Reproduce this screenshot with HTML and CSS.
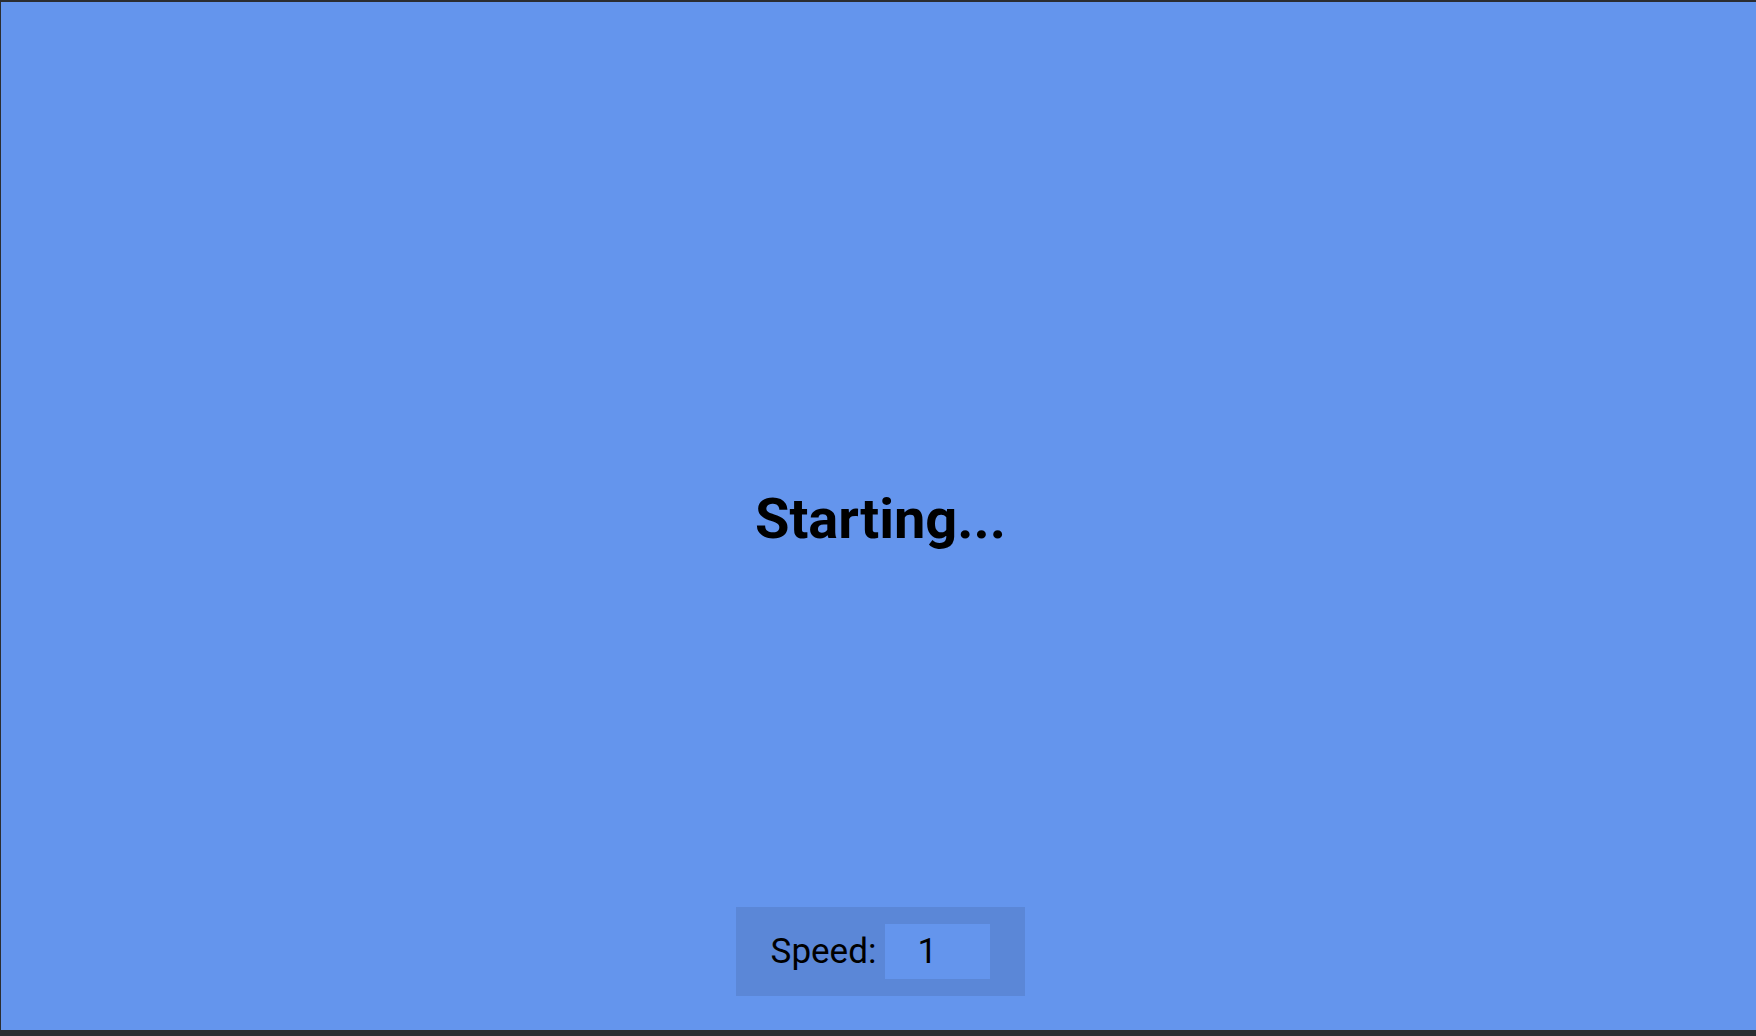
FILE: index.html
```html
<!DOCTYPE html>
<html>
<head>
<meta charset="utf-8">
<link rel="stylesheet" href="styles.css">
</head>
<body>
<div class="frame">
  <div class="stage">
    <h1 class="status">Starting...</h1>
    <div class="controls">
      <label class="speed-label" for="speed">Speed:</label>
      <input class="speed-input" id="speed" type="text" value="1">
    </div>
  </div>
</div>
</body>
</html>
```
FILE: styles.css
```css
html, body {
  margin: 0;
  padding: 0;
  height: 100%;
  background: #2b2d31;
}
.frame {
  box-sizing: border-box;
  height: 100%;
  border-top: 2px solid #2b2d31;
  border-left: 1px solid #2b2d31;
  border-bottom: 6px solid #2b2d31;
  background: #6495ed;
  font-family: Roboto, "Liberation Sans", sans-serif;
  color: #000;
}
.stage {
  height: 100%;
  display: grid;
  grid-template-rows: 1fr;
  grid-template-columns: 1fr;
  justify-items: center;
}
.status {
  grid-area: 1 / 1;
  align-self: center;
  margin: 6px 0 0 4px;
  font-size: 56px;
  font-weight: 700;
  line-height: 1;
}
.controls {
  grid-area: 1 / 1;
  align-self: end;
  margin: 0 0 34px 4px;
  display: flex;
  align-items: center;
  gap: 9px;
  padding: 17px 35px 17px 35px;
  background: #5b87d7;
}
.speed-label {
  font-size: 35px;
}
.speed-input {
  box-sizing: border-box;
  width: 105px;
  height: 55px;
  border: none;
  outline: none;
  background: #6495ed;
  font-family: Roboto, "Liberation Sans", sans-serif;
  font-size: 35px;
  color: #000;
  padding: 0 0 0 32px;
  margin: 0;
}
```
